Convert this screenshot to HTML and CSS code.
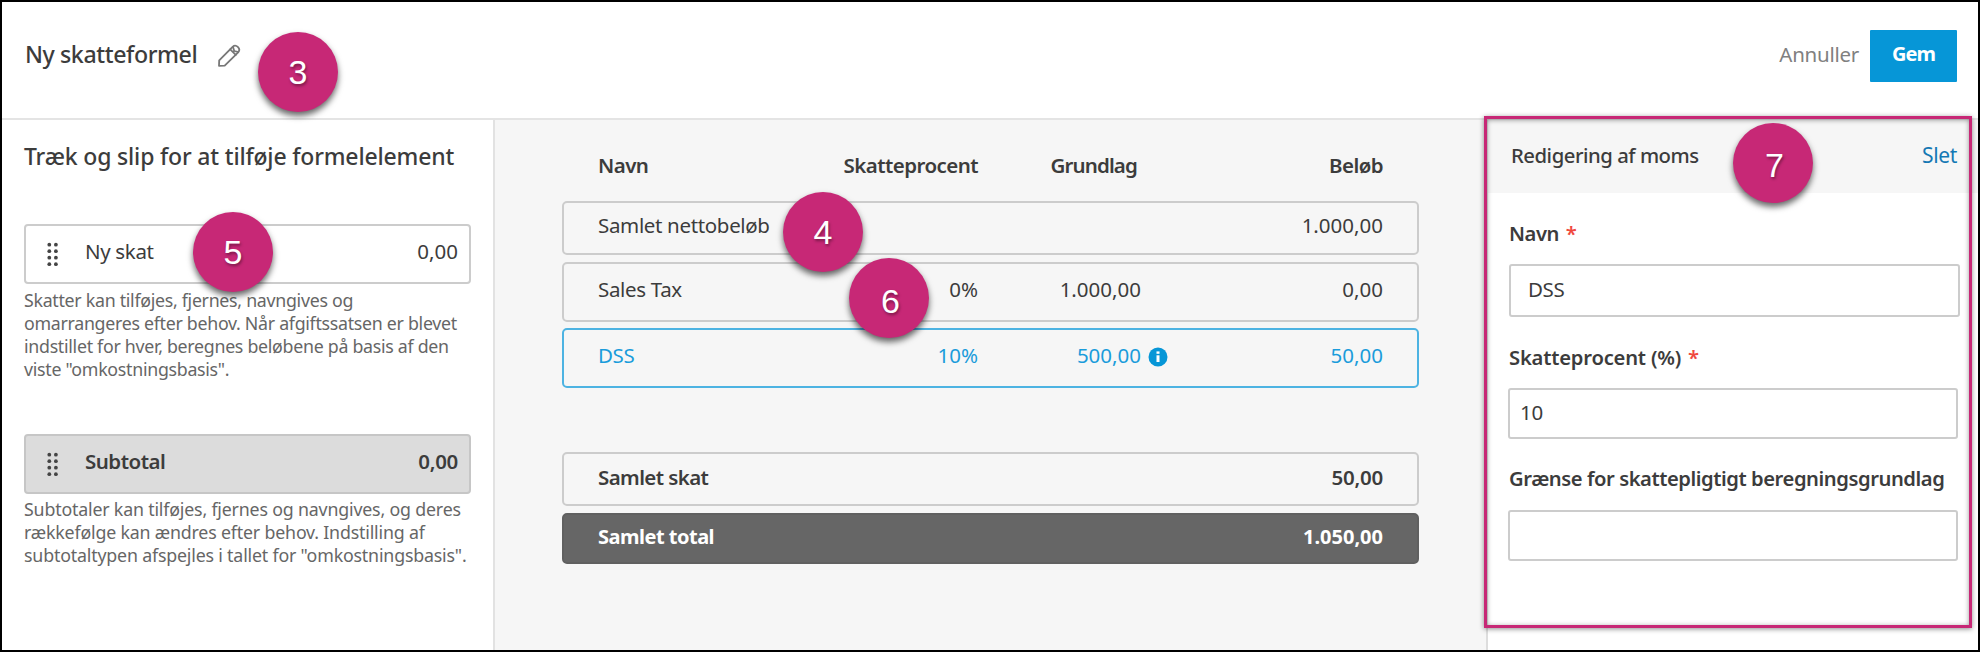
FILE: index.html
```
<!DOCTYPE html>
<html lang="da">
<head>
<meta charset="utf-8">
<title>Ny skatteformel</title>
<link rel="stylesheet" href="styles.css">
</head>
<body>
<div class="app">
  <header class="topbar">
    <h1 class="topbar-title">Ny skatteformel</h1>
    <svg class="pencil" width="24" height="24" viewBox="0 0 24 24" fill="none" stroke="#777" stroke-width="1.8" stroke-linejoin="round" stroke-linecap="round">
      <path d="M2 21.8 L2.2 16.4 L15.6 2.8 Q18.2 0.4 20.8 2.9 Q23.6 5.6 21.2 8.3 L7.7 21.6 Z"/>
      <path d="M13.2 5.3 L18.8 10.8 M16.2 3.6 L17.2 7 L20.6 7.9"/>
    </svg>
    <div class="topbar-actions">
      <span class="cancel">Annuller</span>
      <button class="save">Gem</button>
    </div>
  </header>
  <main class="panes">
    <aside class="palette">
      <h2 class="palette-title">Træk og slip for at tilføje formelelement</h2>
      <div class="item">
        <svg class="grip" width="12" height="25" viewBox="0 0 12 25" fill="#444"><circle cx="2.3" cy="2.7" r="1.9"/><circle cx="8.9" cy="2.7" r="1.9"/><circle cx="2.3" cy="9.2" r="1.9"/><circle cx="8.9" cy="9.2" r="1.9"/><circle cx="2.3" cy="15.7" r="1.9"/><circle cx="8.9" cy="15.7" r="1.9"/><circle cx="2.3" cy="22.2" r="1.9"/><circle cx="8.9" cy="22.2" r="1.9"/></svg>
        <span class="item-name">Ny skat</span><span class="num">0,00</span>
      </div>
      <p class="help">Skatter kan tilføjes, fjernes, navngives og<br>omarrangeres efter behov. Når afgiftssatsen er blevet<br>indstillet for hver, beregnes beløbene på basis af den<br>viste "omkostningsbasis".</p>
      <div class="item item-subtotal">
        <svg class="grip" width="12" height="25" viewBox="0 0 12 25" fill="#444"><circle cx="2.3" cy="2.7" r="1.9"/><circle cx="8.9" cy="2.7" r="1.9"/><circle cx="2.3" cy="9.2" r="1.9"/><circle cx="8.9" cy="9.2" r="1.9"/><circle cx="2.3" cy="15.7" r="1.9"/><circle cx="8.9" cy="15.7" r="1.9"/><circle cx="2.3" cy="22.2" r="1.9"/><circle cx="8.9" cy="22.2" r="1.9"/></svg>
        <span class="item-name">Subtotal</span><span class="num">0,00</span>
      </div>
      <p class="help help-subtotal">Subtotaler kan tilføjes, fjernes og navngives, og deres<br>rækkefølge kan ændres efter behov. Indstilling af<br>subtotaltypen afspejles i tallet for "omkostningsbasis".</p>
    </aside>
    <section class="formula">
      <div class="row row-head"><span>Navn</span><span>Skatteprocent</span><span class="head-base">Grundlag</span><span>Beløb</span></div>
      <div class="row row-net"><span>Samlet nettobeløb</span><span></span><span></span><span class="num">1.000,00</span></div>
      <div class="row row-tax"><span>Sales Tax</span><span class="rate">0%</span><span class="num">1.000,00</span><span class="num">0,00</span></div>
      <div class="row row-tax row-selected"><span>DSS</span><span class="rate">10%</span><span class="num base">500,00<svg class="info" width="20" height="20" viewBox="0 0 20 20"><circle cx="10" cy="10" r="9.5" fill="#0696d7"/><rect x="8.5" y="8.3" width="3" height="6.7" fill="#fff"/><rect x="8.5" y="4.4" width="3" height="2.4" fill="#fff"/></svg></span><span class="num">50,00</span></div>
      <div class="row row-sum"><span>Samlet skat</span><span></span><span></span><span class="num">50,00</span></div>
      <div class="row row-total"><span>Samlet total</span><span></span><span></span><span class="num">1.050,00</span></div>
    </section>
    <aside class="editor">
      <div class="editor-head"><h2 class="editor-title">Redigering af moms</h2><span class="delete">Slet</span></div>
      <div class="fields">
        <label class="label">Navn <span class="required">*</span></label>
        <div class="input input-name">DSS</div>
        <label class="label label-rate">Skatteprocent (%) <span class="required">*</span></label>
        <div class="input">10</div>
        <label class="label label-limit">Grænse for skattepligtigt beregningsgrundlag</label>
        <div class="input"></div>
      </div>
    </aside>
  </main>
  <div class="highlight"></div>
  <div class="badge badge-3">3</div>
  <div class="badge badge-4">4</div>
  <div class="badge badge-5">5</div>
  <div class="badge badge-6">6</div>
  <div class="badge badge-7">7</div>
</div>
</body>
</html>
```
FILE: styles.css
```
* { box-sizing: border-box; }
body { margin: 0; }
h1, h2, p { margin: 0; font-weight: 500; }

.app {
  position: relative;
  display: flex;
  flex-direction: column;
  width: 1980px;
  height: 652px;
  overflow: hidden;
  border: 2px solid #000;
  background: #fff;
  color: #3c3c3c;
  font-family: "Noto Sans", "Open Sans", sans-serif;
  font-size: 20.5px;
  font-weight: 450;
  line-height: 24px;
  letter-spacing: -0.34px;
  white-space: nowrap;
}
.num { letter-spacing: 0; }

/* Top bar */
.topbar {
  display: flex;
  height: 118px;
  padding: 0 21px 0 23px;
  border-bottom: 2px solid #e4e4e4;
}
.topbar-title { margin-top: 39px; font-size: 23.2px; line-height: 26px; letter-spacing: -0.42px; }
.pencil { margin: 42px 0 0 20px; }
.topbar-actions { display: flex; margin-left: auto; }
.cancel { margin: 40px 11px 0 0; color: #808080; letter-spacing: -0.25px; }
.save {
  width: 87px;
  height: 52px;
  margin-top: 28px;
  padding: 0 0 4px;
  border: 0;
  border-radius: 1px;
  background: #0696d7;
  color: #fff;
  font: 700 20px/24px "Noto Sans", sans-serif;
  letter-spacing: -0.9px;
}

.panes { display: flex; flex: 1; min-height: 0; }

/* Left palette */
.palette { width: 493px; padding: 25px 22px 0 22px; border-right: 2px solid #e2e2e2; }
.palette-title { margin-top: -9px; font-size: 23px; line-height: 40px; letter-spacing: -0.17px; }
.item {
  display: flex;
  height: 60px;
  margin-top: 48px;
  padding: 13px 11px 0 20px;
  border: 2px solid #ccc;
  border-radius: 4px;
}
.grip { margin: 3px 26px 0 1px; }
.item .num { margin-left: auto; }
.help {
  margin-top: 5px;
  color: #666;
  font-size: 17.8px;
  font-weight: 400;
  line-height: 23px;
  letter-spacing: -0.29px;
}
.item-subtotal { margin-top: 53px; background: #dcdcdc; border-color: #c6c6c6; font-weight: 600; letter-spacing: -0.5px; }
.item-subtotal .num { letter-spacing: -0.3px; }
.help-subtotal { margin-top: 4px; letter-spacing: -0.18px; }

/* Formula table */
.formula { flex: 1; padding: 31px 67px 0 67px; background: #f6f6f6; }
.row {
  display: grid;
  grid-template-columns: 240px 140px 163px 242px;
  width: 857px;
  padding-left: 34px;
  border: 2px solid #ccc;
  border-radius: 5px;
}
.row > span { text-align: right; }
.row > span:first-child { text-align: left; }
.row-head { height: 50px; border-color: transparent; font-weight: 600; letter-spacing: -0.55px; }
.row > .head-base { padding-right: 4px; letter-spacing: -0.85px; }
.rate { letter-spacing: 0; }
.row-net { height: 54px; padding-top: 10px; }
.row-tax { height: 60px; margin-top: 7px; padding-top: 13px; }
.row-selected { margin-top: 6px; border-color: #4db3e2; color: #1a9cdb; }
.base { position: relative; }
.info { position: absolute; left: 100%; top: 4px; margin-left: 7px; }
.row-sum { height: 54px; margin-top: 64px; padding-top: 11px; font-weight: 600; letter-spacing: -0.6px; }
.row-sum .num { letter-spacing: -0.2px; }
.row-total {
  height: 51px;
  margin-top: 7px;
  padding-top: 10px;
  border-color: #606060;
  background: #666;
  color: #fff;
  font-size: 20px;
  font-weight: 700;
  letter-spacing: -0.5px;
}

/* Right editor */
.editor { width: 492px; border-left: 2px solid #ddd; }
.editor-head {
  display: flex;
  justify-content: space-between;
  height: 73px;
  padding: 23px 21px 0 23px;
  background: #f6f6f6;
}
.editor-title { font-size: 20.3px; letter-spacing: -0.47px; }
.delete { color: #1478b4; font-size: 21px; }
.fields { padding: 28px 20px 0 20px; }
.label { display: block; padding-left: 1px; font-size: 20.2px; font-weight: 600; letter-spacing: -0.44px; }
.required { margin-left: 2px; color: #f0483e; }
.input {
  height: 51px;
  padding: 10px 0 0 10px;
  border: 2px solid #ccc;
  border-radius: 3px;
}
.input-name { height: 53px; margin: 19px -2px 0 1px; padding: 11px 0 0 17px; }
.label-rate { margin: 28px 0 19px; letter-spacing: -0.2px; }
.label-limit { margin: 27px 0 20px; }

/* Callouts over the screen */
.highlight {
  position: absolute;
  left: 1482px;
  top: 114px;
  width: 488px;
  height: 512px;
  border: 3px solid #c72876;
  box-shadow: 0 1px 5px rgba(0, 0, 0, 0.45), inset 0 1px 5px rgba(0, 0, 0, 0.4);
}
.badge {
  position: absolute;
  width: 80px;
  height: 80px;
  border-radius: 50%;
  background: #c72876;
  box-shadow: 0 4px 6px rgba(0, 0, 0, 0.6);
  color: #fff;
  font: 34px/81px "Liberation Sans", Arial, sans-serif;
  letter-spacing: 0;
  text-align: center;
  text-shadow: 1px 2px 3px rgba(0, 0, 0, 0.4);
}
.badge-3 { left: 256px; top: 30px; }
.badge-4 { left: 781px; top: 190px; }
.badge-5 { left: 191px; top: 210px; }
.badge-6 { left: 847px; top: 256px; padding-left: 3px; line-height: 87px; }
.badge-7 { left: 1731px; top: 121px; padding-left: 3px; line-height: 85px; }
```
